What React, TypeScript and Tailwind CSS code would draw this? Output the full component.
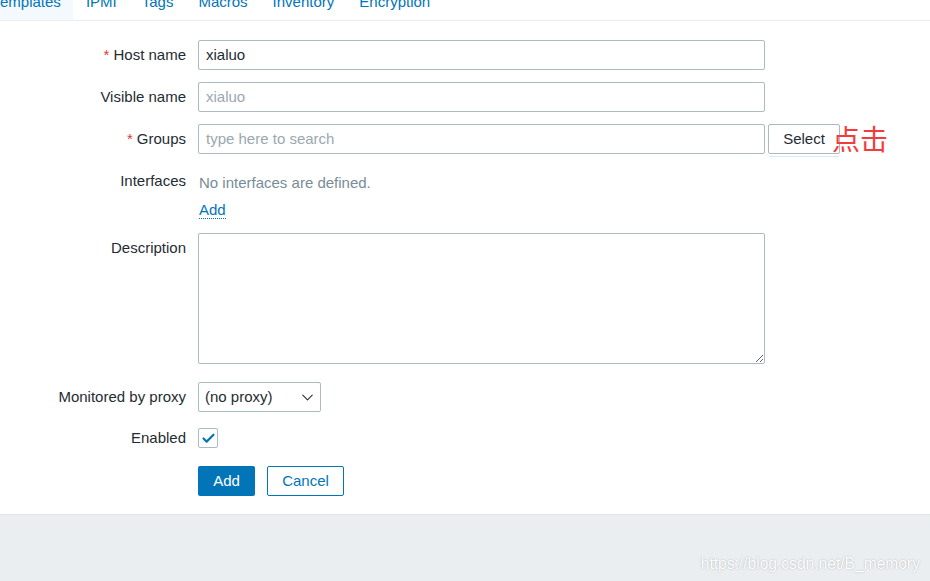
import { Check, ChevronDown } from "lucide-react";

const tabs = ["Templates", "IPMI", "Tags", "Macros", "Inventory", "Encryption"];

export default function App() {
  return (
    <div className="flex h-[581px] w-[930px] flex-col overflow-hidden bg-white font-['Liberation_Sans',Arial,sans-serif] text-[15px] text-[#1f2c33]">
      <div className="flex h-[21px] shrink-0 items-end overflow-hidden border-b border-[#ebeef0]">
        <div className="ml-[-20px] flex leading-[18px]">
          {tabs.map((t, i) => (
            <div
              key={t}
              className={`px-[12.5px] pb-[9px] pt-[2px] text-[#0275b8] ${
                i === 0 ? "bg-[#f4f9fd]" : ""
              }`}
            >
              {t}
            </div>
          ))}
        </div>
      </div>

      <div className="flex flex-1 flex-col pt-[19px]">
        <Row label="Host name" required>
          <TextInput value="xialuo" />
        </Row>
        <Row label="Visible name" className="mt-[12px]">
          <TextInput placeholder="xialuo" />
        </Row>
        <Row label="Groups" required className="mt-[12px]">
          <div className="flex items-start">
            <TextInput placeholder="type here to search" />
            <div className="ml-[3px] flex flex-col">
              <button className="h-[30px] w-[72px] rounded-[2px] border border-[#acbbc2] bg-white text-[#1f2c33]">
                Select
              </button>
              <div className="mx-[1px] mt-[2px] h-px bg-[#d9eaf7]" />
            </div>
            <span className="ml-[-8px] mt-[-2px] font-['Noto_Sans_CJK_SC',sans-serif] text-[28px] leading-[32px] text-[#f23c3c]">
              点击
            </span>
          </div>
        </Row>

        <div className="mt-[12px] flex">
          <div className="w-[186px] pt-[3px] text-right leading-[18px]">Interfaces</div>
          <div className="ml-[13px] flex flex-col leading-[18px]">
            <span className="pt-[5px] text-[#768d99]">No interfaces are defined.</span>
            <a className="mt-[9px] w-fit border-b border-dotted border-[#0275b8] leading-[17px] text-[#0275b8]">
              Add
            </a>
          </div>
        </div>

        <div className="mt-[14px] flex">
          <div className="w-[186px] pt-[6px] text-right leading-[18px]">Description</div>
          <textarea className="ml-[12px] h-[131px] w-[567px] rounded-[2px] border border-[#acbbc2] outline-none" />
        </div>

        <Row label="Monitored by proxy" className="mt-[18px]">
          <div className="flex h-[30px] w-[123px] items-center justify-between rounded-[2px] border border-[#acbbc2] pl-[6px] pr-[3px]">
            <span>(no proxy)</span>
            <ChevronDown size={19} strokeWidth={1.3} className="text-[#1f2c33]" />
          </div>
        </Row>

        <div className="mt-[16px] flex items-center">
          <div className="w-[186px] text-right leading-[18px]">Enabled</div>
          <div className="ml-[12px] flex h-[20px] w-[20px] items-center justify-center rounded-[2px] border border-[#acbbc2]">
            <Check size={15} strokeWidth={3.4} className="text-[#0275b8]" />
          </div>
        </div>

        <div className="ml-[198px] mt-[18px] flex gap-[12px]">
          <button className="h-[30px] w-[57px] rounded-[2px] bg-[#0275b8] text-white">Add</button>
          <button className="h-[30px] w-[77px] rounded-[2px] border border-[#0275b8] bg-white text-[#0275b8]">
            Cancel
          </button>
        </div>
      </div>

      <div className="flex h-[67px] shrink-0 items-end justify-end border-t border-[#dfe4e7] bg-[#ebeef0] pb-[6px] pr-[10px]">
        <span className="text-[15.6px] text-white [text-shadow:0_0_1.5px_#9aa3a8]">
          https://blog.csdn.net/B_memory
        </span>
      </div>
    </div>
  );
}

function Row({
  label,
  required,
  className = "",
  children,
}: {
  label: string;
  required?: boolean;
  className?: string;
  children: React.ReactNode;
}) {
  return (
    <div className={`flex items-start ${className}`}>
      <div className="flex h-[30px] w-[186px] items-center justify-end leading-[18px]">
        {required && <span className="mr-[4px] text-[#e33734]">*</span>}
        {label}
      </div>
      <div className="ml-[12px]">{children}</div>
    </div>
  );
}

function TextInput({ value, placeholder }: { value?: string; placeholder?: string }) {
  return (
    <div className="flex h-[30px] w-[567px] items-center rounded-[2px] border border-[#acbbc2] px-[7px]">
      {value ? (
        <span className="text-[#1f2c33]">{value}</span>
      ) : (
        <span className="text-[#9aa8b0]">{placeholder}</span>
      )}
    </div>
  );
}
